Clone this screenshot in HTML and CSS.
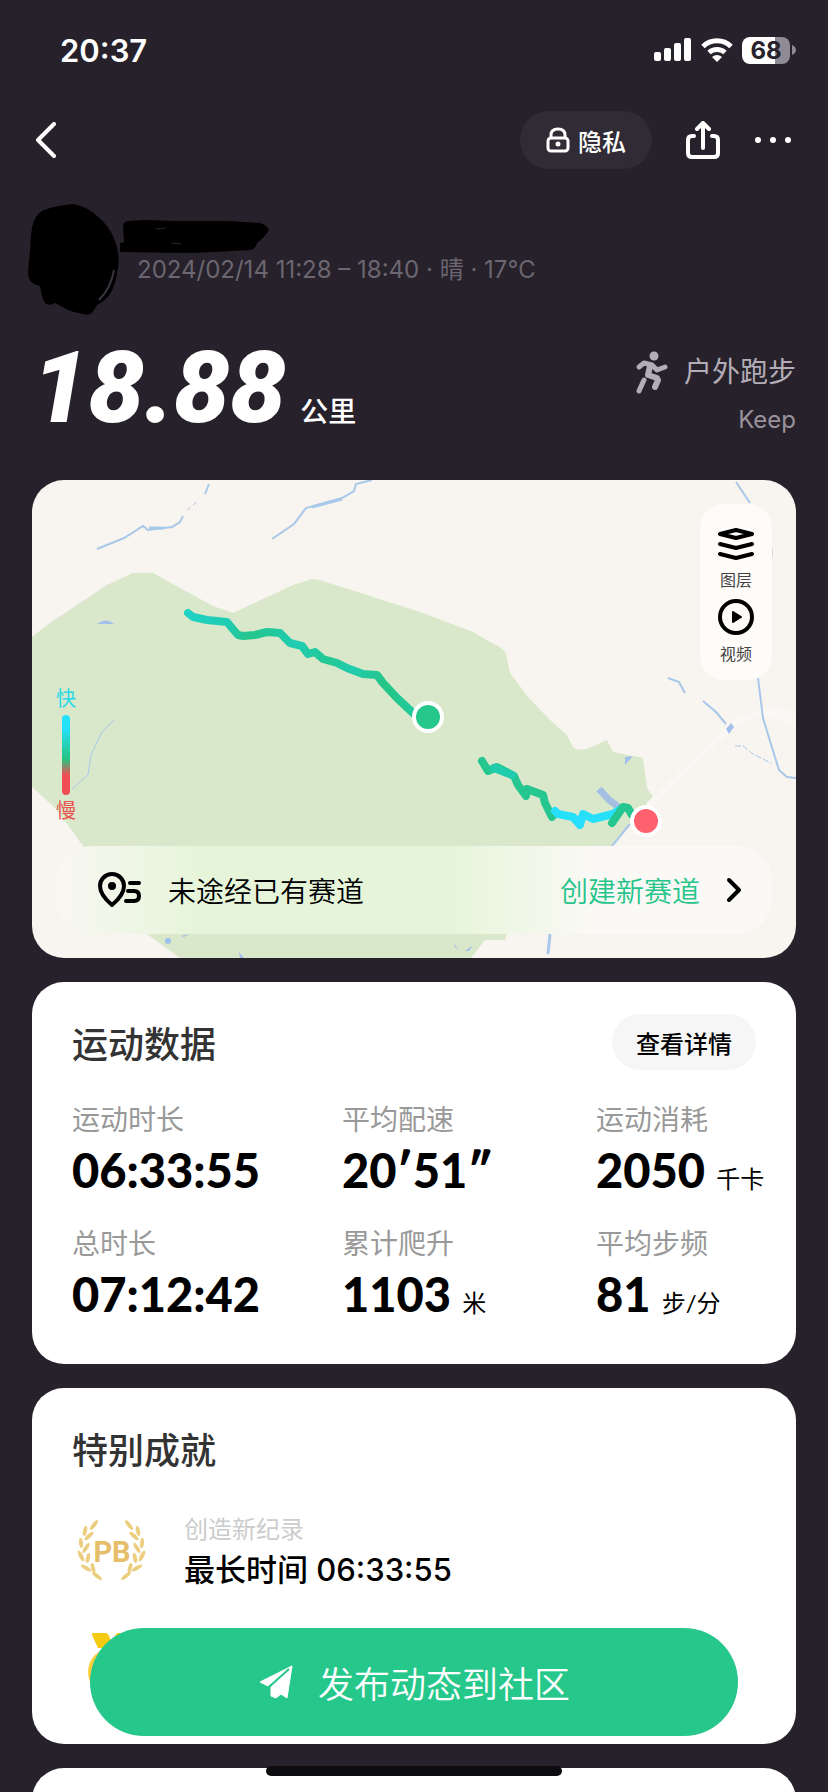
FILE: index.html
```html
<!DOCTYPE html>
<html lang="zh-CN">
<head>
    <meta charset="UTF-8">
    <meta name="viewport" content="width=device-width, initial-scale=1.0">
    <title>户外跑步</title>
    <link rel="stylesheet" href="styles.css">
</head>
<body>
    <div class="screen">
        <!-- Status bar -->
        <div class="status-bar">
            <span class="time">20:37</span>
            <div class="status-icons">
                <svg width="38" height="24" viewBox="0 0 38 24" fill="#fff">
                    <rect x="0" y="14" width="7" height="9" rx="2"/>
                    <rect x="10" y="10" width="7" height="13" rx="2"/>
                    <rect x="20" y="5" width="7" height="18" rx="2"/>
                    <rect x="30" y="0" width="7" height="23" rx="2"/>
                </svg>
                <svg width="32" height="24" viewBox="0 0 32 24" fill="none" stroke="#fff" stroke-width="5">
                    <path d="M2 8.500a20 20 0 0 1 28 0"/>
                    <path d="M8 14.500a12 12 0 0 1 16 0"/>
                    <path d="M16 24l-5-5q5-4 10 0z" fill="#fff" stroke="none"/>
                </svg>
                <div class="battery">
                    <span class="battery-level">68</span>
                    <svg width="4" height="10" viewBox="0 0 4 10"><path d="M0 0q4 2 4 5t-4 5z" fill="#8f8b94"/></svg>
                </div>
            </div>
        </div>

        <!-- Navigation -->
        <header class="nav">
            <button class="icon-btn" aria-label="返回">
                <svg width="22" height="36" viewBox="0 0 22 36" fill="none" stroke="#fff" stroke-width="4" stroke-linecap="round" stroke-linejoin="round"><path d="M20 2L4 18l16 16"/></svg>
            </button>
            <div class="nav-actions">
                <button class="privacy-btn">
                    <svg width="24" height="26" viewBox="0 0 24 26" fill="none" stroke="#fff" stroke-width="3">
                        <rect x="2" y="11" width="20" height="13" rx="3"/>
                        <path d="M5 11V8q0-6 7-6t7 6v3"/>
                        <circle cx="12" cy="17" r="2.500" fill="#fff" stroke="none"/>
                    </svg>
                    隐私
                </button>
                <button class="icon-btn" aria-label="分享">
                    <svg width="34" height="38" viewBox="0 0 34 38" fill="none" stroke="#fff" stroke-width="4" stroke-linecap="round" stroke-linejoin="round">
                        <path d="M8 15H6q-4 0-4 4v13q0 4 4 4h22q4 0 4-4V19q0-4-4-4h-2"/>
                        <path d="M17 27V3M11 8l6-6 6 6"/>
                    </svg>
                </button>
                <button class="icon-btn" aria-label="更多">
                    <svg width="38" height="8" viewBox="0 0 38 8" fill="#fff"><circle cx="4" cy="4" r="3"/><circle cx="19" cy="4" r="3"/><circle cx="34" cy="4" r="3"/></svg>
                </button>
            </div>
        </header>

        <main class="content">
            <!-- Profile -->
            <section class="profile">
                <svg class="avatar" width="91" height="112" viewBox="0 0 91 112">
                    <path d="M2 47Q2 35 4 24Q6 12 14 7Q24 2 45 0Q58 2 69 12Q82 22 87 37Q92 50 90 64Q88 80 82 90Q76 98 69 101L64 109Q60 112 55 110L42 107L27 99Q23 102 18 100Q14 96 12 82Q0 80 0 68Z"/>
                    <path d="M86 66Q83 84 71 96" fill="none" stroke="#3a343e" stroke-width="2"/>
                </svg>
                <div class="profile-text">
                    <svg width="151" height="34" viewBox="0 0 151 34"><path d="M4 6Q4 2 9 1L25 0L58 1L110 1L141 3Q148 5 150 10Q146 17 138 23Q137 29 131 30Q100 32 68 33L1 32V23L5 22Z"/><path d="M37 9l10-1M52 23l10 1" stroke="#2a262c"/></svg>
                    <p class="meta">2024/02/14 11:28 – 18:40 · 晴 · 17℃</p>
                </div>
            </section>

            <!-- Distance -->
            <section class="summary">
                <div class="distance"><span class="distance-value">18.88</span> <span class="distance-unit">公里</span></div>
                <div class="sport">
                    <p class="sport-name">
                        <svg width="36" height="44" viewBox="0 0 36 44" fill="none" stroke="#b3adb7" stroke-width="5" stroke-linecap="round" stroke-linejoin="round">
                            <circle cx="20" cy="6" r="4.500" fill="#b3adb7" stroke="none"/>
                            <path d="M5 17l5-4 8 2 5 5 8-3"/>
                            <path d="M16 16l-2 9 9 3 1 2-3 7" stroke-width="6"/>
                            <path d="M10 30L5 41"/>
                        </svg>
                        户外跑步
                    </p>
                    <p class="source">Keep</p>
                </div>
            </section>

            <!-- Route map -->
            <section class="map-card">
                <svg class="map" viewBox="0 0 764 478" preserveAspectRatio="xMidYMid slice">
                    <defs>
                        <linearGradient id="pace" x1="156" y1="133" x2="381" y2="233" gradientUnits="userSpaceOnUse">
                            <stop offset="0" stop-color="#20d2c4"/>
                            <stop offset=".16" stop-color="#20cdb4"/>
                            <stop offset=".26" stop-color="#25c58c"/>
                            <stop offset=".45" stop-color="#20cdb2"/>
                            <stop offset=".6" stop-color="#23c894"/>
                            <stop offset=".7" stop-color="#20ccb0"/>
                            <stop offset=".85" stop-color="#25c585"/>
                            <stop offset="1" stop-color="#21c99c"/>
                        </linearGradient>
                    </defs>
                    <rect width="764" height="478" fill="#f8f4ef"/>
                    <!-- park -->
                    <path fill="#d9e8ca" d="M0 157L15 145L75 105L101 93H121L181 126L201 133L261 105L280 99L288 100L388 132L441 152L458 162Q472 168 474 174L478 193L496 217L518 240L535 255L541 267Q545 271 555 269L575 260L581 272L611 278L615 308L621 317L616 328L598 345L580 366L475 454L473 460H453L439 478H148L115 454L51 366L41 352L23 328L0 307Z"/>
                    <!-- roads -->
                    <g fill="none" stroke="#faf8f5" stroke-width="6">
                        <path d="M616 326L690 255Q725 222 764 235"/>
                        <path d="M700 246Q725 225 764 243"/>
                    </g>
                    <!-- rivers -->
                    <g fill="none" stroke="#a8c8ea" stroke-width="2">
                        <path d="M65 69L92 58L111 46L116 50L140 47L148 42L151 36"/>
                        <path d="M155 30l10-8" stroke-width="1" stroke-dasharray="4 4"/>
                        <path d="M173 14L177 4"/>
                        <path d="M240 59L262 44L274 28L310 18L322 11L324 4L340 0"/>
                        <path d="M704 2L718 23"/>
                        <path d="M117 48h15" stroke-width="3"/>
                        <path d="M280 27L310 19" stroke-width="3"/>
                        <path d="M82 240L70 252L59 275L56 295L40 309" stroke-width="1"/>
                        <path d="M636 198L647 202L653 213"/>
                        <path d="M671 221L684 232L694 244"/>
                        <path d="M726 198L731 238L738 261L747 290L755 297L764 298"/>
                        <path d="M740 68v9" stroke-width="1"/>
                        <path d="M703 266h8l10 8 18 9" stroke-width="1" stroke-dasharray="6 2"/>
                        <path d="M518 454L516 474" stroke-width="3"/>
                        <path d="M598 344L580 366"/>
                        <path d="M567 309L577 320L588 328" stroke="#a5bfe2" stroke-width="7"/>
                    </g>
                    <g fill="#a3bfec">
                        <path d="M65 144q9-7 17 0zM593 277l8-1-8 9zM699 243l3 4-5 7-3-5z"/>
                        <circle cx="136" cy="461" r="3"/>
                        <path d="M149 456l8-2-5 3zM207 472l5 6h-4zM433 471l8-6-4 6zM422 463l4 6-3-2z"/>
                    </g>
                    <!-- run track -->
                    <g fill="none" stroke-width="8" stroke-linecap="round" stroke-linejoin="round">
                        <path stroke="url(#pace)" d="M156 133L161 137L175 140L195 142L200 148L206 155L211 156L223 155L235 152L248 153L258 163L270 166L276 174L283 172L291 179L305 183L315 188L331 194L345 195L351 203L365 218L381 233"/>
                        <path stroke="#25c690" d="M450 281L456 291L465 287L482 296L486 305L494 316L495 309L511 315L513 323L520 337"/>
                        <path stroke="#20cbae" d="M462 288L480 295"/>
                        <path stroke="#26e0fb" d="M523 331L526 334L541 337L548 345L551 334L561 339L581 334L589 329"/>
                        <path stroke="#25c690" d="M580 343L591 327L596 328L600 335"/>
                    </g>
                    <circle cx="396" cy="237" r="14" fill="#25c78a" stroke="#fff" stroke-width="4"/>
                    <circle cx="614" cy="341" r="14" fill="#ff626e" stroke="#fff" stroke-width="4"/>
                </svg>

                <div class="map-tools">
                    <button class="tool-btn">
                        <svg width="36" height="34" viewBox="0 0 36 34" fill="none" stroke="#000" stroke-width="4" stroke-linecap="round" stroke-linejoin="round"><path d="M2 7l16-4 16 4-16 4zM2 17l16 4 16-4M2 27l16 4 16-4"/></svg>
                        图层
                    </button>
                    <button class="tool-btn">
                        <svg width="36" height="36" viewBox="0 0 36 36"><circle cx="18" cy="18" r="16" fill="none" stroke="#000" stroke-width="4"/><path d="M15 13l8 5-8 5z" stroke="#000" stroke-width="2" stroke-linejoin="round"/></svg>
                        视频
                    </button>
                </div>

                <div class="pace-legend">
                    <span class="fast">快</span>
                    <span class="pace-bar"></span>
                    <span class="slow">慢</span>
                </div>

                <a class="route-bar" href="#">
                    <svg width="43" height="36" viewBox="0 0 43 36" fill="none" stroke="#000" stroke-width="4" stroke-linecap="round" stroke-linejoin="round">
                        <path d="M14 33Q2 23 2 14a12 12 0 0 1 24 0q0 9-12 19z"/>
                        <circle cx="14" cy="14" r="4" fill="#000" stroke="none"/>
                        <path d="M32 11h9M30 19h6q5 0 5 5t-5 5h-8"/>
                    </svg>
                    <span>未途经已有赛道</span>
                    <span class="create-route">创建新赛道</span>
                    <svg width="16" height="26" viewBox="0 0 16 26" fill="none" stroke="#000" stroke-width="4" stroke-linecap="round" stroke-linejoin="round"><path d="M3 3l10 10L3 23"/></svg>
                </a>
            </section>

            <!-- Workout data -->
            <section class="card">
                <div class="card-header">
                    <h2>运动数据</h2>
                    <button class="detail-btn">查看详情</button>
                </div>
                <dl class="stats">
                    <div><dt>运动时长</dt><dd>06:33:55</dd></div>
                    <div><dt>平均配速</dt><dd>20′51″</dd></div>
                    <div><dt>运动消耗</dt><dd>2050 <small>千卡</small></dd></div>
                    <div><dt>总时长</dt><dd>07:12:42</dd></div>
                    <div><dt>累计爬升</dt><dd>1103 <small>米</small></dd></div>
                    <div><dt>平均步频</dt><dd>81 <small>步/分</small></dd></div>
                </dl>
            </section>

            <!-- Achievements -->
            <section class="card">
                <div class="card-header">
                    <h2>特别成就</h2>
                </div>
                <ul class="awards">
                    <li>
                        <svg width="80" height="80" viewBox="0 0 80 80" fill="#ecce80">
                            <defs>
                                <g id="laurel">
                                    <ellipse cx="22" cy="13" rx="2" ry="6" transform="rotate(38 22 13)"/>
                                    <ellipse cx="13" cy="19" rx="2" ry="5" transform="rotate(12 13 19)"/>
                                    <ellipse cx="17" cy="24" rx="2" ry="6" transform="rotate(48 17 24)"/>
                                    <ellipse cx="9" cy="31" rx="2" ry="5" transform="rotate(-6 9 31)"/>
                                    <ellipse cx="14" cy="36" rx="2" ry="6" transform="rotate(32 14 36)"/>
                                    <ellipse cx="9" cy="44" rx="2" ry="6" transform="rotate(-28 9 44)"/>
                                    <ellipse cx="16" cy="46" rx="2" ry="5" transform="rotate(12 16 46)"/>
                                    <ellipse cx="14" cy="56" rx="2" ry="6" transform="rotate(-60 14 56)"/>
                                    <ellipse cx="21" cy="56" rx="2" ry="5" transform="rotate(-15 21 56)"/>
                                    <ellipse cx="25" cy="64" rx="2" ry="6" transform="rotate(-52 25 64)"/>
                                </g>
                            </defs>
                            <use href="#laurel"/>
                            <use href="#laurel" transform="translate(79 0) scale(-1 1)"/>
                            <text class="pb" x="40" y="50" text-anchor="middle">PB</text>
                        </svg>
                        <div>
                            <p class="award-type">创造新纪录</p>
                            <p class="award-name">最长时间 06:33:55</p>
                        </div>
                    </li>
                    <li>
                        <svg width="80" height="80" viewBox="0 0 80 80">
                            <path d="M20 9h14q2 0 3 3l5 12H26l-6-13z" fill="#f5ca12"/>
                            <path d="M60 9H46q-2 0-3 3l-5 12h16l6-13z" fill="#f5ca12"/>
                            <circle cx="40" cy="48" r="24" fill="#ffd03b"/>
                        </svg>
                    </li>
                </ul>
            </section>

            <section class="card"></section>
        </main>

        <button class="publish-btn">
            <svg width="36" height="36" viewBox="0 0 36 36" fill="#fff" stroke="#fff" stroke-linejoin="round"><path d="M2 18L34 2L10 22z"/><path d="M34 2L29 34L23 30L18 34L13 32V23z"/><path d="M31 5L11 23" stroke="#26c78a" stroke-width="2"/></svg>
            发布动态到社区
        </button>
        <div class="home-indicator"></div>
    </div>
</body>
</html>
```

FILE: styles.css
```css
/* General Styles */
* {
    box-sizing: border-box;
}

body {
    margin: 0;
    background-color: #26212b;
    color: #fff;
    font-family: 'Inter', 'Noto Sans CJK SC', sans-serif;
}

p, h2, dl, dd, ul {
    margin: 0;
    padding: 0;
}

svg {
    display: block;
    flex-shrink: 0;
}

button {
    border: none;
    padding: 0;
    background: none;
    color: inherit;
    font-family: inherit;
    cursor: pointer;
}

.screen {
    height: 100vh;
    overflow: hidden;
}

/* Status bar */
.status-bar {
    display: flex;
    align-items: center;
    justify-content: space-between;
    height: 100px;
    padding: 0 32px 0 60px;
}

.time {
    font-size: 31px;
    font-weight: 600;
}

.status-icons {
    display: flex;
    align-items: center;
    gap: 9px;
}

.battery {
    display: flex;
    align-items: center;
    gap: 2px;
}

.battery-level {
    width: 48px;
    border-radius: 8px;
    background: linear-gradient(to right, #fff 68%, #8f8b94 68%);
    color: #26212b;
    font-size: 24px;
    font-weight: 700;
    line-height: 27px;
    text-align: center;
}

/* Navigation */
.nav {
    display: flex;
    align-items: center;
    justify-content: space-between;
    height: 80px;
    padding: 0 36px 0 34px;
}

.nav-actions {
    display: flex;
    align-items: center;
    gap: 34px;
}

.privacy-btn {
    display: flex;
    align-items: center;
    gap: 8px;
    height: 58px;
    padding: 0 26px;
    border-radius: 29px;
    background-color: #302b35;
    font-size: 24px;
    font-weight: 500;
}

/* Content */
.content {
    display: flex;
    flex-direction: column;
    gap: 24px;
    padding: 0 32px;
}

.profile {
    display: flex;
    margin-top: 24px;
    margin-left: -4px;
}

.profile-text {
    padding-top: 16px;
}

.meta {
    padding-left: 18px;
    color: #6b6670;
    font-size: 24px;
    line-height: 32px;
}

.summary {
    display: flex;
    align-items: flex-end;
    justify-content: space-between;
    height: 116px;
}

.distance {
    display: flex;
    align-items: baseline;
    gap: 14px;
    padding-bottom: 16px;
}

.distance-value {
    font-family: 'Roboto', sans-serif;
    font-size: 100px;
    font-style: italic;
    font-weight: 900;
    line-height: 104px;
}

.distance-unit {
    font-size: 28px;
    font-weight: 500;
    line-height: 40px;
}

.sport {
    padding-bottom: 16px;
    text-align: right;
}

.sport-name {
    display: flex;
    align-items: center;
    gap: 14px;
    color: #b3adb7;
    font-size: 28px;
    line-height: 56px;
}

.source {
    color: #98929c;
    font-size: 24px;
    line-height: 40px;
}

/* Route map */
.map-card {
    position: relative;
    display: flex;
    flex-direction: column;
    justify-content: space-between;
    height: 478px;
    padding: 24px;
    border-radius: 32px;
    overflow: hidden;
    color: #000;
}

.map {
    position: absolute;
    top: 0;
    left: 0;
    width: 100%;
    height: 100%;
}

.map-tools {
    position: relative;
    display: flex;
    flex-direction: column;
    align-items: center;
    align-self: flex-end;
    gap: 8px;
    width: 72px;
    padding: 23px 0 15px;
    border-radius: 24px;
    background-color: #fefbf9;
}

.tool-btn {
    display: flex;
    flex-direction: column;
    align-items: center;
    gap: 8px;
    color: #444;
    font-size: 16px;
    line-height: 22px;
}

.pace-legend {
    position: relative;
    display: flex;
    flex-direction: column;
    align-items: center;
    gap: 4px;
    width: 20px;
    margin-bottom: 16px;
    font-size: 20px;
    line-height: 24px;
}

.fast {
    color: #26d9e8;
}

.slow {
    color: #e8544f;
}

.pace-bar {
    width: 8px;
    height: 80px;
    border-radius: 4px;
    background: linear-gradient(#24e1ff 15%, #25c481 55%, #f04e55 75%);
}

.route-bar {
    position: relative;
    display: flex;
    align-items: center;
    height: 88px;
    padding: 0 30px 0 42px;
    border-radius: 36px;
    background: linear-gradient(to right, #f9f7f2, #e6f5da 20%, #e6f5da 55%, #fbf9f5 75%);
    color: #000;
    font-size: 28px;
    font-weight: 350;
    text-decoration: none;
}

.route-bar span {
    margin-left: 27px;
}

.route-bar .create-route {
    margin: 0 26px 0 auto;
    color: #25c48a;
}

/* Cards */
.card {
    min-height: 120px;
    padding: 32px 40px 40px;
    border-radius: 32px;
    background-color: #fff;
    color: #000;
}

.card-header {
    display: flex;
    align-items: center;
    justify-content: space-between;
    height: 56px;
}

h2 {
    color: #333;
    font-size: 36px;
    font-weight: 500;
}

.detail-btn {
    height: 56px;
    padding: 0 24px;
    border-radius: 28px;
    background-color: #f6f6f6;
    font-size: 24px;
    font-weight: 500;
}

.stats {
    display: grid;
    grid-template-columns: 270fr 254fr 160fr;
    gap: 24px 0;
    margin-top: 30px;
}

.stats div {
    min-width: 0;
    white-space: nowrap;
}

.stats dt {
    color: #999;
    font-size: 28px;
    line-height: 40px;
}

.stats dd {
    font-family: 'Lato', 'Noto Sans CJK SC', sans-serif;
    font-size: 47px;
    font-weight: 900;
    line-height: 60px;
}

.stats small {
    font-size: 24px;
    font-weight: 400;
    line-height: 24px;
}

.awards {
    display: flex;
    flex-direction: column;
    gap: 32px;
    margin-top: 36px;
    list-style: none;
}

.awards li {
    display: flex;
    align-items: center;
    gap: 32px;
}

.pb {
    font-family: 'Liberation Sans Narrow', 'Roboto', sans-serif;
    font-size: 29px;
    font-weight: 700;
    fill: #e6bd68;
}

.award-type {
    color: #ccc;
    font-size: 24px;
    line-height: 36px;
}

.award-name {
    font-size: 31px;
    font-weight: 500;
    line-height: 44px;
}

/* Publish button */
.publish-btn {
    position: fixed;
    right: 90px;
    bottom: 56px;
    left: 90px;
    display: flex;
    align-items: center;
    justify-content: center;
    gap: 24px;
    height: 108px;
    border-radius: 54px;
    background-color: #26c78a;
    font-size: 36px;
    font-weight: 350;
}

.home-indicator {
    position: fixed;
    bottom: 16px;
    left: 50%;
    width: 296px;
    height: 10px;
    margin-left: -148px;
    border-radius: 5px;
    background-color: #0d0d0f;
}
```
